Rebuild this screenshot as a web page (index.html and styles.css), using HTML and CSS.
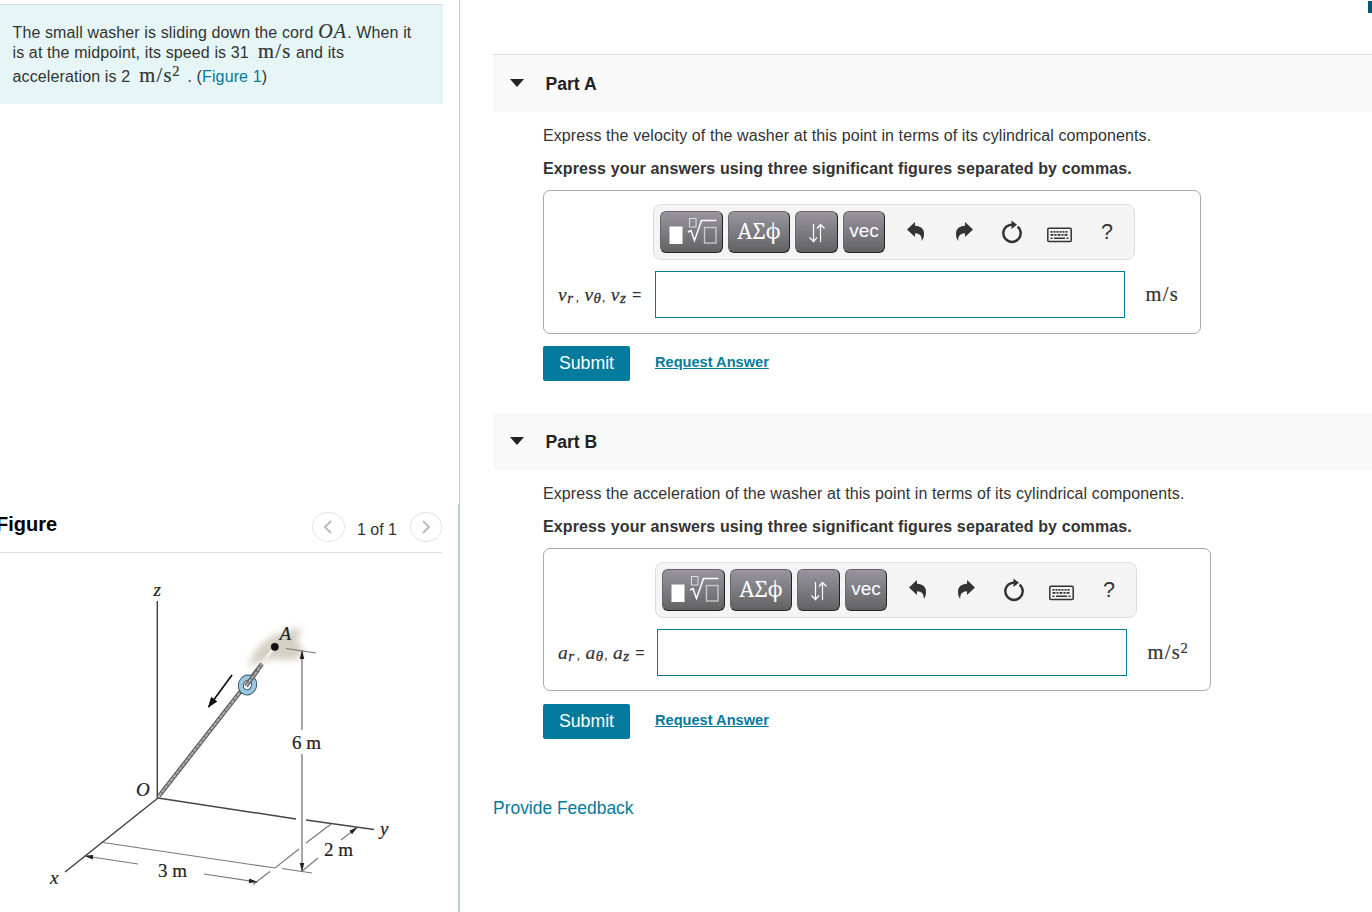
FILE: index.html
```html
<!DOCTYPE html>
<html lang="en">
<head>
<meta charset="utf-8">
<title>Washer on a cord</title>
<link rel="stylesheet" href="styles.css">
</head>
<body>
<svg class="defs" width="0" height="0">
  <symbol id="root" viewBox="0 0 50 30">
    <rect x="1.500" y="9.500" width="13" height="17.500" fill="#fff"/>
    <rect x="21.500" y="1.500" width="6.500" height="8.500" fill="none" stroke="#ddd"/>
    <path d="M20 15l3-1.500 3.500 10L33.500 3.500h15" fill="none" stroke="#fff" stroke-width="1.500"/>
    <rect x="36.500" y="10.500" width="11.500" height="15.500" fill="none" stroke="#ccc" stroke-width="1.300"/>
  </symbol>
  <symbol id="updown" viewBox="0 0 18 20">
    <path d="M5.500 1v17M1.500 14.500l4 4V14M5.500 18.500l3.500-4M12.500 19V1.500M9 5.500l3.500-4 4 4" fill="none" stroke="#fff" stroke-width="1.200"/>
  </symbol>
  <symbol id="undo" viewBox="0 0 18 20">
    <path d="M0 7.500L8 0v3.800c6 .4 9 3 9 8.200 0 3-.8 5-2.200 7 .2-5-2-7.500-6.800-7.700V15z" fill="#333"/>
  </symbol>
  <symbol id="reset" viewBox="0 0 22 24">
    <path d="M16.600 6.600a8.700 8.700 0 1 1-11.200 0Q8 4.600 12 4.500" fill="none" stroke="#333" stroke-width="2.500"/>
    <path d="M10.500 .5L16 4.700 10.500 9z" fill="#333"/>
  </symbol>
  <symbol id="keys" viewBox="0 0 25 16">
    <rect x=".8" y="1.300" width="23.400" height="13.200" rx="1" fill="none" stroke="#333" stroke-width="1.500"/>
    <path d="M3.500 4.800h18" stroke="#333" stroke-width="1.800" stroke-dasharray="2 1"/>
    <path d="M3.500 7.800h18" stroke="#333" stroke-width="1.800" stroke-dasharray="3 1 2 1"/>
    <path d="M3.500 11.200h2m1.500 0h11m1.500 0h2" stroke="#333" stroke-width="1.600"/>
  </symbol>
</svg>
<div class="page">
  <aside class="left">
    <section class="problem">
      <div class="line l1">The small washer is sliding down the cord <i class="m oa">OA</i>. When it</div>
      <div class="line l2">is at the midpoint, its speed is 31&nbsp; <span class="m">m/s</span> and its</div>
      <div class="line l3">acceleration is 2&nbsp; <span class="m">m/s<sup>2</sup></span> . (<a class="figlink">Figure 1</a>)</div>
    </section>
    <section class="figure">
      <header class="fig-head">
        <h2>Figure</h2>
        <div class="pager">
          <span class="round"><svg width="10" height="14" viewBox="0 0 10 14"><path d="M8 1L2 7l6 6"/></svg></span>
          <span class="count">1 of 1</span>
          <span class="round"><svg width="10" height="14" viewBox="0 0 10 14"><path d="M2 1l6 6-6 6"/></svg></span>
        </div>
      </header>
      <svg class="diagram" width="442" height="359" viewBox="0 553 442 359">
        <defs>
          <filter id="soft" x="-40%" y="-40%" width="180%" height="180%"><feGaussianBlur stdDeviation="3.500"/></filter>
          <marker id="head" viewBox="0 0 10 6" refX="9" refY="3" markerWidth="9" markerHeight="5.500" markerUnits="userSpaceOnUse" orient="auto"><path d="M0 .5L10 3 0 5.500z" fill="#222"/></marker>
          <marker id="bighead" viewBox="0 0 12 9" refX="11" refY="4.500" markerWidth="11" markerHeight="8" markerUnits="userSpaceOnUse" orient="auto"><path d="M0 0L12 4.500 0 9z" fill="#111"/></marker>
        </defs>
        <path d="M247 667l11-20 14-11 30-9-5 15 8 9-10 9-24-1-12 4z" fill="#d3d0c2" filter="url(#soft)"/>
        <g stroke="#444" fill="none">
          <path d="M157.300 601v197" stroke-width="1.500"/>
          <path d="M158 798L65 872M158 798l138 21M306 820l68 9.500" stroke-width="1.500"/>
          <g stroke="#777" stroke-width="1.100">
            <path d="M103 842.500L275 868l24-19M306 843l25-19M282 868.500l30 4.500M286 648.500l30 4.500M253 884.500l17-13"/>
            <path d="M138 864l-53-8" marker-end="url(#head)"/>
            <path d="M204 874l53 8" marker-end="url(#head)"/>
            <path d="M341 840l16-12.500" marker-end="url(#head)"/>
            <path d="M318 858l-15 12.500"/>
          </g>
          <g stroke="#777" stroke-width="1.300">
            <path d="M302 730v-79" marker-end="url(#head)"/>
            <path d="M302 754v117" marker-end="url(#head)"/>
          </g>
        </g>
        <path d="M260 667l13-18" stroke="#eeeee6" stroke-width="3"/>
        <path d="M159 796L262 664" stroke="#555" stroke-width="4.200"/>
        <path d="M159 796L262 664" stroke="#aaa" stroke-width="2.200" stroke-dasharray="4 .7"/>
        <ellipse cx="247.500" cy="685" rx="6.500" ry="7.500" transform="rotate(20 247.500 685)" fill="#fff" stroke="#2e4b5c" stroke-width="6"/>
        <ellipse cx="247.500" cy="685" rx="6.500" ry="7.500" transform="rotate(20 247.500 685)" fill="none" stroke="#9ac8e2" stroke-width="4.300"/>
        <path d="M246 686l12-16" stroke="#555" stroke-width="4.200"/>
        <path d="M246 686l12-16" stroke="#aaa" stroke-width="2.200" stroke-dasharray="4 .7"/>
        <path d="M232 675l-23.500 32" stroke="#111" stroke-width="1.700" marker-end="url(#bighead)"/>
        <circle cx="274.800" cy="646.800" r="3.900" fill="#111"/>
        <g class="labels">
          <text x="153.500" y="596" class="it">z</text>
          <text x="279.500" y="639.500" class="it">A</text>
          <text x="136" y="795.500" class="it">O</text>
          <text x="50" y="884" class="it">x</text>
          <text x="380" y="835" class="it">y</text>
          <text x="292" y="749">6 m</text>
          <text x="324" y="856">2 m</text>
          <text x="158" y="877">3 m</text>
        </g>
      </svg>
    </section>
  </aside>
  <main class="right">
    <div class="corner"></div>
    <section class="part first">
      <header class="part-head"><svg width="14" height="8" viewBox="0 0 14 8"><path d="M0 0h14L7 8z" fill="#222"/></svg><h3>Part A</h3></header>
      <div class="body">
        <p class="ask">Express the velocity of the washer at this point in terms of its cylindrical components.</p>
        <p class="hint">Express your answers using three significant figures separated by commas.</p>
        <div class="answer">
          <div class="tools">
            <span class="btn b1"><svg width="50" height="30"><use href="#root"/></svg></span>
            <span class="btn b2">ΑΣϕ</span>
            <span class="btn b3"><svg width="18" height="20"><use href="#updown"/></svg></span>
            <span class="btn b4">vec</span>
            <span class="ic"><svg width="18" height="20"><use href="#undo"/></svg></span>
            <span class="ic"><svg class="flip" width="18" height="20"><use href="#undo"/></svg></span>
            <span class="ic"><svg width="22" height="24"><use href="#reset"/></svg></span>
            <span class="ic kb"><svg width="25" height="16"><use href="#keys"/></svg></span>
            <span class="ic q">?</span>
          </div>
          <div class="entry">
            <div class="vars"><i>v</i><sub>r</sub><b>,</b> <i>v</i><sub>θ</sub><b>,</b> <i>v</i><sub>z</sub><span class="eq">=</span></div>
            <div class="field"></div>
            <div class="unit m">m/s</div>
          </div>
        </div>
        <div class="actions"><span class="submit">Submit</span><a class="request">Request Answer</a></div>
      </div>
    </section>
    <section class="part second">
      <header class="part-head"><svg width="14" height="8" viewBox="0 0 14 8"><path d="M0 0h14L7 8z" fill="#222"/></svg><h3>Part B</h3></header>
      <div class="body">
        <p class="ask">Express the acceleration of the washer at this point in terms of its cylindrical components.</p>
        <p class="hint">Express your answers using three significant figures separated by commas.</p>
        <div class="answer">
          <div class="tools">
            <span class="btn b1"><svg width="50" height="30"><use href="#root"/></svg></span>
            <span class="btn b2">ΑΣϕ</span>
            <span class="btn b3"><svg width="18" height="20"><use href="#updown"/></svg></span>
            <span class="btn b4">vec</span>
            <span class="ic"><svg width="18" height="20"><use href="#undo"/></svg></span>
            <span class="ic"><svg class="flip" width="18" height="20"><use href="#undo"/></svg></span>
            <span class="ic"><svg width="22" height="24"><use href="#reset"/></svg></span>
            <span class="ic kb"><svg width="25" height="16"><use href="#keys"/></svg></span>
            <span class="ic q">?</span>
          </div>
          <div class="entry">
            <div class="vars"><i>a</i><sub>r</sub><b>,</b> <i>a</i><sub>θ</sub><b>,</b> <i>a</i><sub>z</sub><span class="eq">=</span></div>
            <div class="field"></div>
            <div class="unit m">m/s<sup>2</sup></div>
          </div>
        </div>
        <div class="actions"><span class="submit">Submit</span><a class="request">Request Answer</a></div>
      </div>
    </section>
    <a class="feedback">Provide Feedback</a>
  </main>
</div>
</body>
</html>
```
FILE: styles.css
```css
* { box-sizing: border-box; }
body { margin: 0; background: #fff; color: #333; font: 16px "Liberation Sans", Arial, sans-serif; overflow: hidden; }
h2, h3, p { margin: 0; }
a { color: #047a9c; }
.defs { display: block; }
.page { display: flex; height: 912px; }
.left { width: 460px; flex: none; display: flex; flex-direction: column; justify-content: space-between; background: linear-gradient(#c0c6d2, #c0c6d2) right / 1px 100% no-repeat; }
.problem { width: 443px; height: 100px; margin-top: 4px; padding: 17px 0 0 12.500px; border-top: 1px solid #ddd; background: #e6f6f7; white-space: nowrap; letter-spacing: .12px; }
.line { height: 20px; line-height: 22px; }
.l3 { height: 24px; line-height: 30px; }
.m { font-family: "Liberation Serif", serif; font-size: 20.500px; line-height: 1px; letter-spacing: 1.300px; -webkit-text-stroke: .2px #333; }
.m.oa { font-size: 20px; letter-spacing: 1.200px; }
.m sup { font-size: 14.500px; line-height: 1px; vertical-align: 6px; margin-left: -.5px; }
.problem .m { margin-right: 0; }
.problem .oa { margin-right: 0; }
.problem .l3 .m { margin-right: 2px; }
.figure { height: 408px; border-right: 2px solid #b9cbde; background: #fff; }
.fig-head { width: 442px; height: 49px; border-bottom: 1px solid #ddd; display: flex; justify-content: space-between; }
.fig-head h2 { margin: 8px 0 0 -4px; font-size: 20px; line-height: 24px; color: #000; }
.pager { display: flex; align-items: flex-start; padding-top: 8px; }
.round { width: 32.500px; height: 30px; border: 1px solid #e5e5e5; border-radius: 50%; display: grid; place-items: center; }
.round path { fill: none; stroke: #bbb; stroke-width: 2; }
.count { width: 65px; text-align: center; line-height: 35px; }
.diagram { display: block; }
.labels { font: 19px "Liberation Serif", serif; fill: #222; stroke: #222; stroke-width: .2px; }
.it { font-style: italic; }
.right { flex: 1; padding-left: 33px; display: flex; flex-direction: column; min-width: 0; }
.corner { width: 4px; height: 12px; margin: 1px 0 41px auto; background: #005a70; }
.part-head { height: 57px; background: #f9f9f9; display: flex; align-items: center; gap: 22px; padding-left: 16.500px; }
.part-head svg { margin-bottom: 2px; }
.first .part-head { height: 58px; border-top: 1px solid #ddd; }
.part-head h3 { font-size: 17.600px; line-height: 22px; color: #222; }
.body { padding-left: 50px; white-space: nowrap; }
.ask { margin-top: 14px; line-height: 20px; letter-spacing: .1px; }
.hint { margin-top: 13px; line-height: 20px; font-weight: bold; letter-spacing: .125px; }
.answer { width: 658px; height: 144px; margin-top: 11px; border: 1px solid #aaa; border-radius: 7px; }
.tools { width: 482px; height: 56px; margin: 13px 0 0 109px; border: 1px solid #ddd; border-radius: 8px; background: #f4f4f4; padding: 0 0 1px 6px; display: flex; align-items: center; }
.btn { height: 42px; border: 1px solid #222; border-top-color: #666; border-left-color: #666; border-radius: 6px; background: linear-gradient(#9895a0, #626262); color: #fff; display: grid; place-items: center; margin-right: 5px; }
.b1 { width: 63px; padding-left: 2px; }
.b2 { width: 62px; font: 21.500px "Noto Serif", "Liberation Serif", serif; padding-bottom: 2px; }
.b3 { width: 43px; padding-top: 2px; }
.b4 { width: 42px; font-size: 19px; margin-right: 7px; padding-bottom: 2px; }
.ic { width: 47.800px; display: grid; place-items: center; padding-top: 1px; }
.ic:nth-of-type(7) { padding-left: 2px; }
.flip { transform: scaleX(-1); }
.kb { padding-top: 6px; }
.q { font-size: 21.500px; }
.entry { display: flex; align-items: center; margin-top: 11px; }
.vars { width: 111px; padding: 3px 0 0 14px; font: 19.500px/20px "Liberation Serif", serif; display: flex; align-items: baseline; }
.vars i { -webkit-text-stroke: .2px #333; }
.vars sub { font-size: 15px; font-style: italic; line-height: 1; transform: translateY(2px); min-width: 7.500px; margin-left: .5px; -webkit-text-stroke: .3px #333; }
.vars b { font-size: 13px; font-weight: normal; margin: 0 5.500px 0 1px; }
.eq { font-family: "Liberation Sans", sans-serif; font-size: 16px; margin-left: 4.500px; transform: translateY(-1px); }
.field { width: 470px; height: 47px; border: 1px solid #047a9c; }
.unit { margin-left: 20.500px; }
.actions { display: flex; align-items: center; gap: 25px; margin-top: 12px; height: 35px; }
.submit { width: 87px; height: 35px; border-radius: 2px; background: #047a9c; color: #fff; font-size: 17.700px; line-height: 34px; text-align: center; }
.request { font-size: 14.600px; font-weight: bold; text-decoration: underline; padding-bottom: 3px; }
.second { margin-top: 32px; }
.second .answer { width: 668px; height: 143px; }
.second .tools { margin-left: 111px; }
.second .vars { width: 113px; }
.second .unit { padding-bottom: 4px; }
.second .actions { margin-top: 13px; }
.feedback { margin-top: 58px; font-size: 17.450px; line-height: 22px; }
```
